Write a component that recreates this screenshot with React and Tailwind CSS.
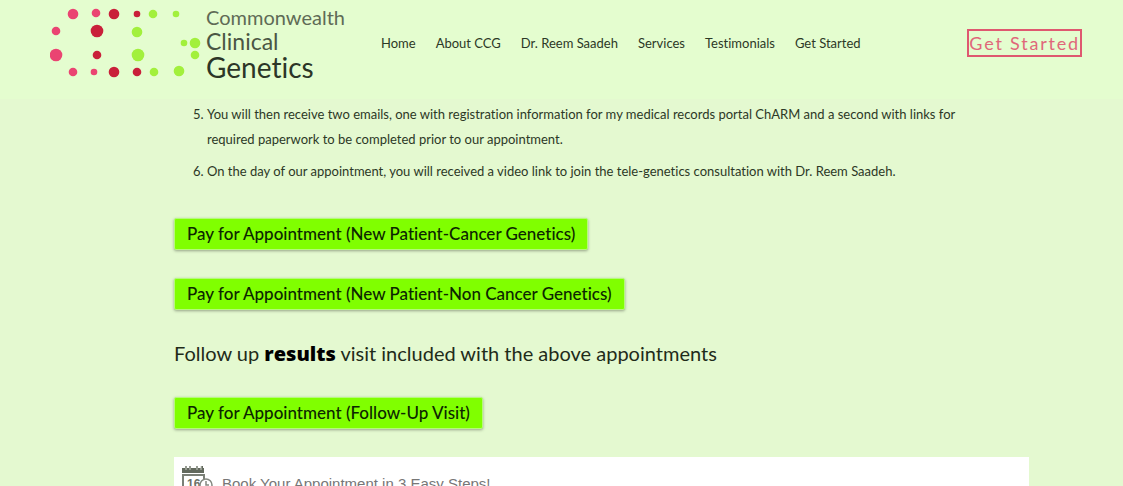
import React from 'react';

const navItems = [
  { label: 'Home', href: '#home' },
  { label: 'About CCG', href: '#about' },
  { label: 'Dr. Reem Saadeh', href: '#dr-saadeh' },
  { label: 'Services', href: '#services' },
  { label: 'Testimonials', href: '#testimonials' },
  { label: 'Get Started', href: '#get-started' },
];

// x, y, radius
const pinkDots = [[23, 14, 5], [46, 13, 4], [6, 31, 4], [6, 55, 6], [23, 72, 4], [44, 72, 3]];
const redDots = [[64, 14, 5], [87, 14, 3], [47, 31, 6], [47, 55, 4], [64, 72, 5], [87, 72, 4]];
const greenDots = [[103, 14, 4], [126, 14, 3], [87, 32, 5], [88, 55, 6], [134, 43, 3], [145, 43, 5], [145, 55, 4], [104, 72, 4], [129, 71, 5]];

const Dots = ({ dots, color }) => (
  <g fill={color}>
    {dots.map(([x, y, r]) => <circle key={`${x}-${y}`} cx={x} cy={y} r={r + 0.3} />)}
  </g>
);

const Logo = () => (
  <a href="#home" className="flex shrink-0 items-center gap-1">
    <svg width="152" height="86" viewBox="0 0 152 86" aria-hidden="true">
      <Dots dots={pinkDots} color="#ea4472" />
      <Dots dots={redDots} color="#c9203a" />
      <Dots dots={greenDots} color="#a2f03c" />
    </svg>
    <span className="flex flex-col">
      <span className="text-xl leading-6 text-[#5f6b56]">Commonwealth</span>
      <span className="text-[23px] leading-6 text-[#4a5643]">Clinical</span>
      <span className="text-[28px] leading-7 text-[#2c3627]">Genetics</span>
    </span>
  </a>
);

const Header = () => (
  <header className="flex h-[99px] items-start justify-between bg-[#e4fdcf] pr-[41px] pl-[50px]">
    <div className="flex items-center gap-9">
      <Logo />
      <nav className="flex gap-5 pt-0.5 text-[13px] text-[#2c3826]">
        {navItems.map((item) => (
          <a key={item.label} href={item.href} className="whitespace-nowrap">{item.label}</a>
        ))}
      </nav>
    </div>
    <a
      href="#get-started"
      className="mt-[29px] border-2 border-[#df5870] text-lg leading-6 tracking-widest whitespace-nowrap text-[#e0677a]"
    >
      Get Started
    </a>
  </header>
);

const PayButton = ({ children }) => (
  <button
    type="button"
    className="rounded-xs border border-[#b5fb79] bg-[#80ff00] px-3 text-[17px] leading-[30px] font-medium text-[#0c2600] shadow-[0_1px_3px_rgba(0,0,0,0.35)]"
  >
    {children}
  </button>
);

const CalendarIcon = () => (
  <svg className="shrink-0" width="31" height="34" viewBox="0 0 31 34" aria-hidden="true">
    <path d="M0 2h3V0h2v2h2V0h2v2h5V0h2v2h3V0h2v2h1v5H0z" fill="#62695d" />
    <path d="M4 0v4M8 0v4M15 0v4M19 0v4" stroke="#c9cec6" strokeWidth="1" />
    <path d="M1 9v22h21V9z" fill="#fff" stroke="#7b8077" strokeWidth="2" />
    <text x="5" y="22" fontSize="12" fontWeight="700" fontFamily="Liberation Sans, sans-serif" fill="#6c7168">16</text>
    <circle cx="24" cy="19" r="6" fill="#fff" stroke="#858981" strokeWidth="1.5" />
    <path d="M24 15v4h3" fill="none" stroke="#858981" strokeWidth="1.5" />
  </svg>
);

const App = () => {
  return (
    <div className="h-screen overflow-hidden bg-[#e4f9d0] font-[Lato,sans-serif] [font-variant-ligatures:none]">
      <Header />
      <main className="pr-[94px] pl-[174px]">
        <ol start={5} className="list-decimal space-y-[7px] pt-[3px] pl-[33px] text-[13px] leading-[25px] text-[#2c3826]">
          <li className="max-w-[760px]">
            You will then receive two emails, one with registration information for my medical records portal ChARM and a second with links for required paperwork to be completed prior to our appointment.
          </li>
          <li>
            On the day of our appointment, you will received a video link to join the tele-genetics consultation with Dr. Reem Saadeh.
          </li>
        </ol>

        <div className="mt-[34px] flex flex-col items-start gap-7">
          <PayButton>Pay for Appointment (New Patient-Cancer Genetics)</PayButton>
          <PayButton>Pay for Appointment (New Patient-Non Cancer Genetics)</PayButton>
          <p className="text-xl leading-[31px] text-[#1f2b19]">
            Follow up <strong className="font-['Open_Sans',sans-serif] font-extrabold text-black">results</strong> visit included with the above appointments
          </p>
          <PayButton>Pay for Appointment (Follow-Up Visit)</PayButton>
        </div>

        <section className="mt-7 flex items-start gap-[9px] bg-white px-2 pt-[9px] pb-4">
          <CalendarIcon />
          <h2 className="pt-1.5 font-['Liberation_Sans',Arial,sans-serif] text-[15px] leading-6 text-[#777]">
            Book Your Appointment in 3 Easy Steps!
          </h2>
        </section>
      </main>
    </div>
  );
};

export default App;
